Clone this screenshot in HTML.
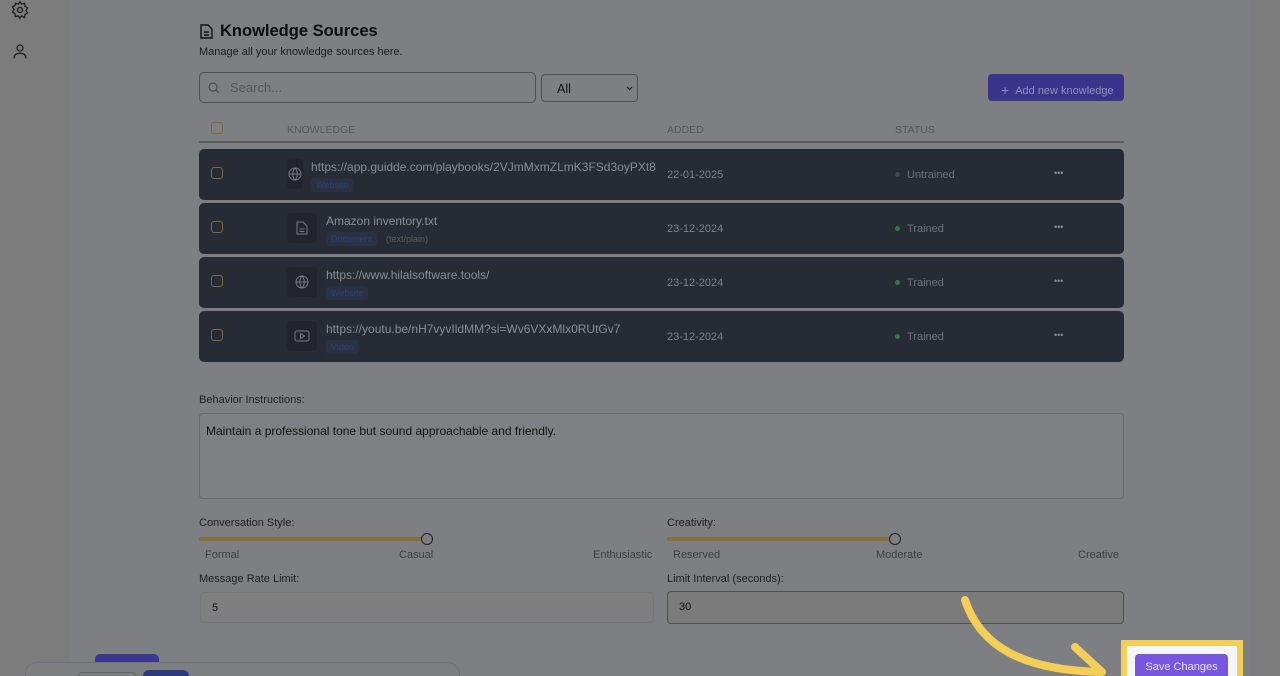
<!DOCTYPE html>
<html style="overflow:hidden;width:1280px;height:676px"><head><style>
*{box-sizing:border-box;margin:0;padding:0}
html,body{overflow:hidden}
body{width:1280px;height:676px;background:#7c7c7d;font-family:"Liberation Sans",sans-serif;position:relative;color:#111}
.main{position:absolute;left:70px;top:0;width:1181px;height:676px;background:#7e7f83}
.abs{position:absolute}
.row{position:absolute;left:199px;width:925px;height:51px;background:#272b35;border-radius:5px}
.cb{position:absolute;left:12px;top:18px;width:12px;height:12px;border:1.5px solid #7d6a3a;border-radius:3px}
.ic{position:absolute;left:88px;top:10px;width:30px;height:30px;background:#22252d;border-radius:4px}
.url{position:absolute;font-size:12px;color:#8a8d94}
.tag{position:absolute;font-size:9px;color:#2e3f78;background:#2a3242;padding:2px 5px;border-radius:3px}
.date{position:absolute;left:468px;top:20px;font-size:11px;color:#7f8289}
.st{position:absolute;left:696px;top:20px;font-size:11px;color:#6f7279}
.st i{display:inline-block;width:5px;height:5px;border-radius:50%;margin-right:7px;vertical-align:middle;position:relative;top:-1px}
.dots{position:absolute;left:855px;top:19px;color:#8a8d94;font-size:9px}
.lbl{position:absolute;font-size:11px;color:#1e1f22}
.sm{position:absolute;font-size:11px;color:#3d3e42}
.inp{position:absolute;border:1px solid #6e6f73;border-radius:4px;background:#7f8083;font-size:11px;color:#111;padding:9px 11px}
</style></head><body>
<div class="main"></div>
<svg class="abs" style="left:10px;top:0" width="20" height="20" viewBox="0 0 24 24" fill="none" stroke="#1a1a1a" stroke-width="1.5"><circle cx="12" cy="12" r="3"/><path d="M12 2l2 3 3.5-1 .5 3.5 3 2-2 3 2 3-3 2-.5 3.5L14 19l-2 3-2-3-3.5 1L6 16.5l-3-2 2-3-2-3 3-2L6.5 4 10 5z"/></svg>
<svg class="abs" style="left:11px;top:42px" width="18" height="18" viewBox="0 0 24 24" fill="none" stroke="#1a1a1a" stroke-width="1.6"><circle cx="12" cy="8" r="4"/><path d="M4 22c0-5 3.5-7 8-7s8 2 8 7"/></svg>

<svg class="abs" style="left:200px;top:24px" width="13" height="15" viewBox="0 0 13 15" fill="none" stroke="#111" stroke-width="1.4"><path d="M1 1h7l4 4v9H1z M4 8h5 M4 11h5"/></svg>
<div class="abs" style="left:220px;top:22px;font-size:16.5px;font-weight:bold;color:#0d0d0f">Knowledge Sources</div>
<div class="abs" style="left:199px;top:46px;font-size:11px;color:#1c1c1e">Manage all your knowledge sources here.</div>

<div class="abs" style="left:199px;top:72px;width:337px;height:31px;border:1px solid #505156;border-radius:5px;background:#7e7f83"></div>
<svg class="abs" style="left:208px;top:82px" width="12" height="12" viewBox="0 0 12 12" fill="none" stroke="#4a4b4f" stroke-width="1.2"><circle cx="5" cy="5" r="4"/><path d="M8 8l3 3"/></svg>
<div class="abs" style="left:230px;top:80px;font-size:13px;color:#56575b">Search...</div>
<div class="abs" style="left:541px;top:74px;width:97px;height:28px;border:1px solid #505156;border-radius:4px;font-size:12.5px;color:#111;padding:7px 15px">All<svg style="position:absolute;right:4px;top:11px" width="7" height="5" viewBox="0 0 7 5" fill="none" stroke="#222" stroke-width="1.2"><path d="M1 1l2.5 2.5L6 1"/></svg></div>
<div class="abs" style="left:988px;top:74px;width:136px;height:27px;background:#38358a;border-radius:4px;font-size:11px;color:#8f90b8;padding:7px 0 0 13px"><span style="font-size:14px;position:relative;top:1px;margin-right:6px">+</span>Add new knowledge</div>

<div class="abs" style="left:211px;top:122px;width:12px;height:12px;border:1.5px solid #7d6a3a;border-radius:3px"></div>
<div class="abs" style="left:287px;top:124px;font-size:10.5px;color:#56575b">KNOWLEDGE</div>
<div class="abs" style="left:667px;top:124px;font-size:10.5px;color:#56575b">ADDED</div>
<div class="abs" style="left:895px;top:124px;font-size:10.5px;color:#56575b">STATUS</div>
<div class="abs" style="left:199px;top:141px;width:925px;height:2px;background:#5c5d61"></div>

<div class="row" style="top:149px"><div class="cb"></div><div class="ic" style="width:16px"><svg style="position:absolute;left:1px;top:8px" width="14" height="14" viewBox="0 0 14 14" fill="none" stroke="#777a80" stroke-width="1"><circle cx="7" cy="7" r="6"/><path d="M1 7h12M7 1c-3 3-3 9 0 12M7 1c3 3 3 9 0 12"/></svg></div><div class="url" style="left:112px;top:11px">https://app.guidde.com/playbooks/2VJmMxmZLmK3FSd3oyPXt8</div><div class="tag" style="left:112px;top:29px">Website</div><div class="date">22-01-2025</div><div class="st"><i style="background:#44464c"></i>Untrained</div><div class="dots">•••</div></div>

<div class="row" style="top:203px"><div class="cb"></div><div class="ic"><svg style="position:absolute;left:9px;top:8px" width="12" height="14" viewBox="0 0 12 14" fill="none" stroke="#777a80" stroke-width="1"><path d="M1 1h6l4 4v8H1z M3.5 8h5 M3.5 10.5h5"/></svg></div><div class="url" style="left:127px;top:11px">Amazon inventory.txt</div><div class="tag" style="left:127px;top:29px">Document</div><div class="abs" style="left:187px;top:31px;font-size:9px;color:#5a5d63">(text/plain)</div><div class="date">23-12-2024</div><div class="st"><i style="background:#2f7a3f"></i>Trained</div><div class="dots">•••</div></div>

<div class="row" style="top:257px"><div class="cb"></div><div class="ic"><svg style="position:absolute;left:8px;top:8px" width="14" height="14" viewBox="0 0 14 14" fill="none" stroke="#777a80" stroke-width="1"><circle cx="7" cy="7" r="6"/><path d="M1 7h12M7 1c-3 3-3 9 0 12M7 1c3 3 3 9 0 12"/></svg></div><div class="url" style="left:127px;top:11px">https://www.hilalsoftware.tools/</div><div class="tag" style="left:127px;top:29px">Website</div><div class="date">23-12-2024</div><div class="st"><i style="background:#2f7a3f"></i>Trained</div><div class="dots">•••</div></div>

<div class="row" style="top:311px"><div class="cb"></div><div class="ic"><svg style="position:absolute;left:7px;top:9px" width="16" height="12" viewBox="0 0 16 12" fill="none" stroke="#777a80" stroke-width="1"><rect x="1" y="1" width="14" height="10" rx="2"/><path d="M6.5 3.5v5l4-2.5z"/></svg></div><div class="url" style="left:127px;top:11px">https://youtu.be/nH7vyvIldMM?si=Wv6VXxMlx0RUtGv7</div><div class="tag" style="left:127px;top:29px">Video</div><div class="date">23-12-2024</div><div class="st"><i style="background:#2f7a3f"></i>Trained</div><div class="dots">•••</div></div>

<div class="lbl" style="left:199px;top:394px">Behavior Instructions:</div>
<div class="inp" style="left:199px;top:413px;width:925px;height:86px;font-size:12px;padding:10px 6px;border-color:#6a6b6f">Maintain a professional tone but sound approachable and friendly.</div>

<div class="lbl" style="left:199px;top:517px">Conversation Style:</div>
<div class="abs" style="left:199px;top:537px;width:228px;height:4px;background:#86703a;border-radius:2px"></div>
<div class="abs" style="left:421px;top:533px;width:12px;height:12px;border:1.5px solid #222;border-radius:50%;background:#7e7f83"></div>
<div class="sm" style="left:205px;top:549px">Formal</div><div class="sm" style="left:399px;top:549px">Casual</div><div class="sm" style="left:593px;top:549px">Enthusiastic</div>
<div class="lbl" style="left:667px;top:517px">Creativity:</div>
<div class="abs" style="left:667px;top:537px;width:228px;height:4px;background:#86703a;border-radius:2px"></div>
<div class="abs" style="left:889px;top:533px;width:12px;height:12px;border:1.5px solid #222;border-radius:50%;background:#7e7f83"></div>
<div class="sm" style="left:673px;top:549px">Reserved</div><div class="sm" style="left:876px;top:549px">Moderate</div><div class="sm" style="left:1078px;top:549px">Creative</div>

<div class="lbl" style="left:199px;top:573px">Message Rate Limit:</div>
<div class="inp" style="left:200px;top:592px;width:454px;height:31px;border-color:#76777b;background:#7f7f80">5</div>
<div class="lbl" style="left:667px;top:573px">Limit Interval (seconds):</div>
<div class="inp" style="left:667px;top:591px;width:457px;height:33px;border:1.5px solid #4f5054;background:#7b7b7c">30</div>

<div class="abs" style="left:95px;top:654px;width:64px;height:22px;background:#3a378e;border-radius:5px 5px 0 0"></div>
<div class="abs" style="left:25px;top:662px;width:435px;height:14px;background:#7d7e81;border:1px solid #727377;border-bottom:none;border-radius:12px 12px 0 0"></div>
<div class="abs" style="left:78px;top:672px;width:58px;height:4px;border:1px solid #656669;border-bottom:none;border-radius:8px 8px 0 0"></div>
<div class="abs" style="left:143px;top:670px;width:46px;height:6px;background:#2f3a7a;border-radius:10px 10px 0 0"></div>

<svg class="abs" style="left:950px;top:590px" width="170" height="86" viewBox="0 0 170 86" fill="none" stroke="#f3cf58" stroke-width="8" stroke-linecap="round"><path d="M15 10C30 55 70 80 150 82"/><path d="M125 57L152 82"/></svg>
<div class="abs" style="left:1121px;top:640px;width:122px;height:36px;background:#f4f6fb;border:6px solid #f3cf58;border-bottom:none"></div>
<div class="abs" style="left:1135px;top:654px;width:93px;height:22px;background:#7657de;border-radius:4px 4px 0 0;color:#e4e0f8;font-size:11px;text-align:center;padding-top:7px">Save Changes</div>
</body></html>
